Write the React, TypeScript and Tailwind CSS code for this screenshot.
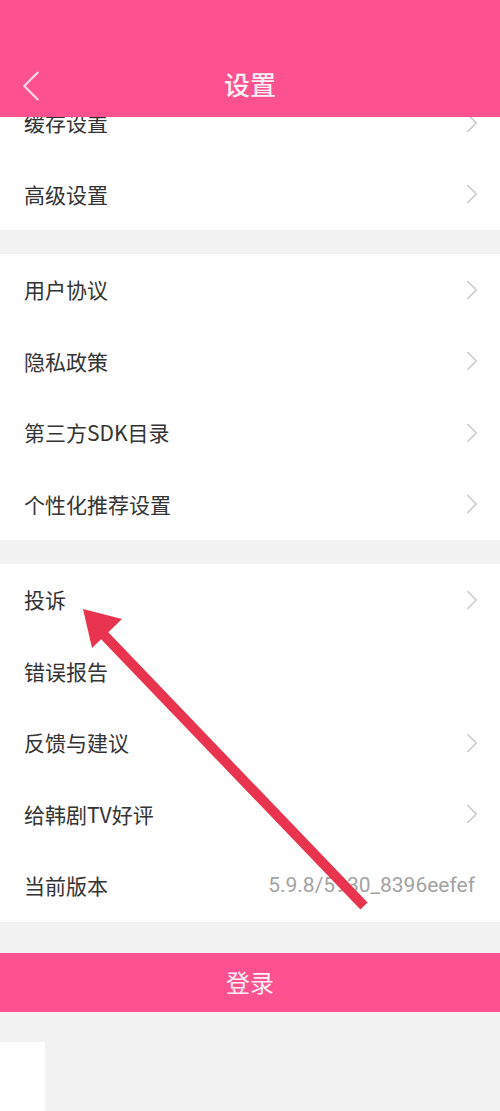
import { ChevronRight, ChevronLeft } from 'lucide-react'

const font = { fontFamily: '"Noto Sans CJK SC", "Noto Sans", sans-serif' }

type Row = { label: string; value?: string; noArrow?: boolean }

const sections: Row[][] = [
  [{ label: '缓存设置' }, { label: '高级设置' }],
  [
    { label: '用户协议' },
    { label: '隐私政策' },
    { label: '第三方SDK目录' },
    { label: '个性化推荐设置' },
  ],
  [
    { label: '投诉' },
    { label: '错误报告', noArrow: true },
    { label: '反馈与建议' },
    { label: '给韩剧TV好评' },
    { label: '当前版本', value: '5.9.8/5930_8396eefef' },
  ],
]

function SettingRow({ row }: { row: Row }) {
  return (
    <div className="h-[71.5px] flex items-center justify-between pl-6 pr-[11px]">
      <span className="text-[21px] text-[#333]">{row.label}</span>
      {row.value ? (
        <span
          className="text-[21px] text-[#a3a3a3] pr-[14px]"
          style={{ fontFamily: 'Roboto, "Noto Sans", sans-serif' }}
        >
          {row.value}
        </span>
      ) : row.noArrow ? null : (
        <ChevronRight className="w-[34px] h-[34px] text-[#cacaca]" strokeWidth={1.1} />
      )}
    </div>
  )
}

export default function App() {
  return (
    <div className="relative w-[500px] h-[1111px] overflow-hidden bg-[#f2f2f2]" style={font}>
      <header className="relative z-10 h-[117px] bg-[#fe5190] flex items-end pb-[14px]">
        <div className="relative w-full h-[40px] flex items-center justify-center">
          <ChevronLeft
            className="absolute left-[4px] -top-[4px] w-[54px] h-[54px] text-[#ffd8e6]"
            strokeWidth={1}
          />
          <span className="text-[26px] text-[#fff0f5] font-medium">设置</span>
        </div>
      </header>

      <div className="-mt-[30px]">
        {sections.map((rows, i) => (
          <div key={i} className={i === 0 ? 'bg-white' : 'bg-white mt-[24px]'}>
            {rows.map((row) => (
              <SettingRow key={row.label} row={row} />
            ))}
          </div>
        ))}

        <button
          type="button"
          className="mt-[31px] w-full h-[59px] bg-[#fe5190] text-[24px] text-[#fff0f5] flex items-center justify-center"
        >
          登录
        </button>

        <div className="mt-[30px] w-[45px] h-[80px] bg-white" />
      </div>

      {/* annotation arrow */}
      <svg className="absolute inset-0 pointer-events-none" width="500" height="1111" viewBox="0 0 500 1111">
        <line x1="364" y1="906" x2="104" y2="635" stroke="#e8344e" strokeWidth="10" strokeLinecap="butt" />
        <polygon points="83,609 122,619 92,648" fill="#e8344e" />
      </svg>
    </div>
  )
}
